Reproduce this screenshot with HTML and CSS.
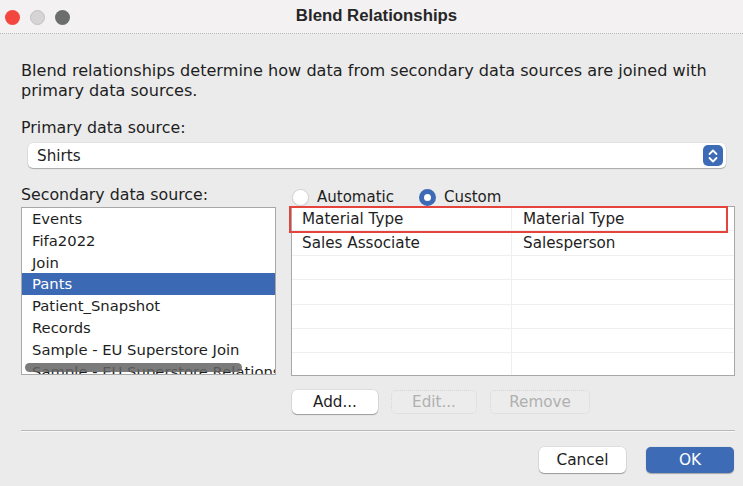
FILE: index.html
```html
<!DOCTYPE html>
<html>
<head>
<meta charset="utf-8">
<link rel="stylesheet" href="styles.css">
</head>
<body>
<div class="window">
  <div class="titlebar">
    <div class="lights">
      <span class="light red"></span>
      <span class="light gray"></span>
      <span class="light dark"></span>
    </div>
    <div class="title">Blend Relationships</div>
  </div>
  <div class="content">
    <p class="desc">Blend relationships determine how data from secondary data sources are joined with primary data sources.</p>
    <div class="label primary-label">Primary data source:</div>
    <div class="select">
      <span>Shirts</span>
      <span class="stepper">
        <svg width="12" height="16" viewBox="0 0 12 16"><path d="M2.5 6 L6 2.5 L9.5 6 M2.5 10 L6 13.5 L9.5 10" fill="none" stroke="#fff" stroke-width="1.8" stroke-linecap="round" stroke-linejoin="round"/></svg>
      </span>
    </div>
    <div class="lower">
      <div class="label sec-label">Secondary data source:</div>
      <div class="radios">
        <span class="radio"><span class="circle"></span>Automatic</span>
        <span class="radio on"><span class="circle"></span>Custom</span>
      </div>
      <div class="list">
        <div class="item">Events</div>
        <div class="item">Fifa2022</div>
        <div class="item">Join</div>
        <div class="item sel">Pants</div>
        <div class="item">Patient_Snapshot</div>
        <div class="item">Records</div>
        <div class="item">Sample - EU Superstore Join</div>
        <div class="item">Sample - EU Superstore Relations</div>
        <div class="scrollbar"></div>
      </div>
      <div class="table">
        <div class="row hl"><span class="c1">Material Type</span><span class="c2">Material Type</span></div>
        <div class="row"><span class="c1">Sales Associate</span><span class="c2">Salesperson</span></div>
        <div class="row"><span class="c1"></span><span class="c2"></span></div>
        <div class="row"><span class="c1"></span><span class="c2"></span></div>
        <div class="row"><span class="c1"></span><span class="c2"></span></div>
        <div class="row"><span class="c1"></span><span class="c2"></span></div>
        <div class="row last"><span class="c1"></span><span class="c2"></span></div>
        <div class="redbox"></div>
      </div>
      <div></div>
      <div class="actions">
        <span class="btn">Add...</span>
        <span class="btn disabled">Edit...</span>
        <span class="btn disabled wide">Remove</span>
      </div>
    </div>
    <div class="sep"></div>
    <div class="footer">
      <span class="btn cancel">Cancel</span>
      <span class="btn ok">OK</span>
    </div>
  </div>
</div>
</body>
</html>
```
FILE: styles.css
```css
html, body {
  margin: 0;
  padding: 0;
}
body {
  width: 743px;
  height: 486px;
  overflow: hidden;
  background: #ebebeb;
  font-family: "DejaVu Sans", Verdana, sans-serif;
  font-size: 15.8px;
  color: #1e1e1e;
}
.window {
  display: flex;
  flex-direction: column;
  height: 486px;
}
.titlebar {
  height: 33px;
  background: #f3f1f2;
  border-bottom: 1px dotted #b5b5b5;
  display: flex;
  align-items: center;
  position: relative;
}
.lights {
  display: flex;
  gap: 10px;
  padding-left: 5px;
  padding-top: 1px;
}
.light {
  width: 15px;
  height: 15px;
  border-radius: 50%;
  display: block;
}
.light.red { background: #f2463e; }
.light.gray { background: #d6d4d5; border: 1px solid #c3c1c2; width: 13px; height: 13px; }
.light.dark { background: #6b6e6c; }
.title {
  position: absolute;
  left: 0;
  right: 0;
  top: 6px;
  text-align: center;
  font-family: "Liberation Sans", Arial, sans-serif;
  font-weight: bold;
  font-size: 16.8px;
  color: #262626;
  padding-left: 10px;
}
.content {
  padding: 0 8px 0 21px;
  display: flex;
  flex-direction: column;
}
.desc {
  margin: 27px 0 0 0;
  line-height: 20px;
  width: 700px;
  font-size: 16.1px;
}
.primary-label {
  margin-top: 17px;
  line-height: 20px;
}
.select {
  margin: 5px 0 0 7px;
  width: 698px;
  height: 25px;
  background: #fff;
  border-radius: 5px;
  box-shadow: 0 1px 1px rgba(0,0,0,0.25), 0 0 0 0.5px rgba(0,0,0,0.08);
  display: flex;
  align-items: center;
  justify-content: space-between;
  box-sizing: border-box;
  padding: 0 3px 0 9px;
  font-size: 15.2px;
}
.stepper {
  width: 20px;
  height: 21px;
  background: #3d6bb6;
  border-radius: 5px;
  display: flex;
  align-items: center;
  justify-content: center;
}
.lower {
  display: grid;
  grid-template-columns: 255px 444px;
  column-gap: 15px;
  margin-top: 17px;
}
.label { line-height: 20px; }
.radios {
  display: flex;
  gap: 25px;
  align-items: center;
  padding-left: 1px;
  height: 20px;
  margin-top: 2px;
  font-size: 15px;
}
.radio {
  display: flex;
  align-items: center;
  gap: 8px;
}
.circle {
  width: 17px;
  height: 17px;
  border-radius: 50%;
  background: #fff;
  border: 1px solid #d4d4d4;
  box-sizing: border-box;
  display: block;
  box-shadow: 0 0.5px 1px rgba(0,0,0,0.1);
}
.radio.on .circle {
  background: #fff;
  border: 5.5px solid #3d6bb6;
  box-shadow: none;
}
.list {
  height: 168px;
  box-sizing: border-box;
  border: 1.5px solid #a8a8a8;
  background: #fff;
  overflow: hidden;
  position: relative;
  font-size: 14.8px;
}
.item {
  height: 21.8px;
  line-height: 21.8px;
  padding-left: 10px;
  white-space: nowrap;
}
.item.sel {
  background: #3b69b4;
  color: #fff;
}
.scrollbar {
  position: absolute;
  left: 3px;
  top: 155px;
  width: 217px;
  height: 9px;
  border-radius: 5px;
  background: rgba(100,100,100,0.85);
}
.table {
  height: 170px;
  box-sizing: border-box;
  border: 1.5px solid #a8a8a8;
  background: #fff;
  position: relative;
  margin-top: -1px;
  display: flex;
  flex-direction: column;
  font-size: 15.2px;
}
.row {
  display: flex;
  height: 24.4px;
  line-height: 24px;
  border-bottom: 1px solid #efefef;
  box-sizing: border-box;
}
.row.last { border-bottom: none; flex: 1; }
.c1 {
  width: 220px;
  border-right: 1px solid #efefef;
  padding-left: 10px;
  box-sizing: border-box;
}
.c2 {
  padding-left: 11px;
}
.redbox {
  position: absolute;
  left: -3px;
  top: -1px;
  width: 439px;
  height: 27px;
  box-sizing: border-box;
  border: 2px solid #e5443c;
}
.actions {
  display: flex;
  gap: 13px;
  margin-top: 14px;
  padding-left: 1px;
  font-size: 15.2px;
}
.btn {
  height: 24px;
  line-height: 24px;
  width: 86px;
  text-align: center;
  border-radius: 5px;
  background: #fff;
  box-shadow: 0 1px 1px rgba(0,0,0,0.3), 0 0 0 0.5px rgba(0,0,0,0.12);
  box-sizing: border-box;
  display: block;
}
.btn.disabled {
  background: #ececec;
  color: #b0b0b0;
  box-shadow: none;
  border: 1px dotted #d6d6d6;
  line-height: 22px;
}
.btn.wide { width: 100px; }
.sep {
  margin-top: 16px;
  width: 714px;
  height: 1px;
  background: #b9b9b9;
  border-bottom: 1px solid #f7f7f7;
}
.footer {
  display: flex;
  justify-content: flex-end;
  gap: 20px;
  margin-top: 15px;
  padding-right: 1px;
  font-size: 15.4px;
}
.btn.cancel { width: 87px; height: 26px; line-height: 26px; }
.btn.ok {
  width: 88px;
  height: 26px;
  line-height: 26px;
  background: #3d6bb6;
  color: #fff;
  box-shadow: 0 0.5px 1px rgba(0,0,0,0.3);
}
```
